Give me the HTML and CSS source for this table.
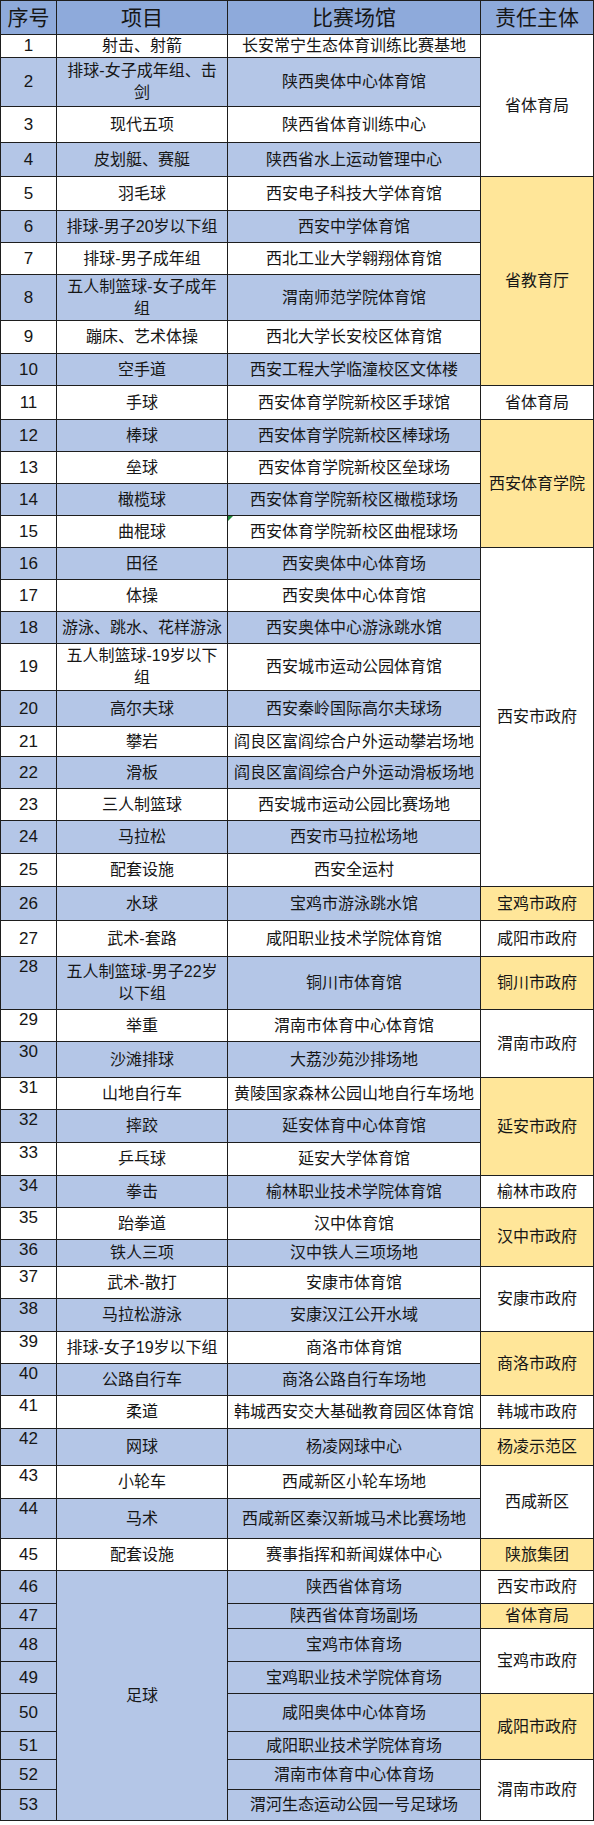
FILE: index.html
```html
<!DOCTYPE html>
<html lang="zh-CN">
<head>
<meta charset="utf-8">
<title>比赛场馆</title>
<link rel="stylesheet" href="styles.css">
</head>
<body>
<div class="sheet">
  <div class="c h">序号</div><div class="c h">项目</div><div class="c h">比赛场馆</div><div class="c h">责任主体</div>

  <div class="c n">1</div><div class="c">射击、射箭</div><div class="c">长安常宁生态体育训练比赛基地</div><div class="c s4">省体育局</div>
  <div class="c n b">2</div><div class="c b">排球-女子成年组、击<br>剑</div><div class="c b">陕西奥体中心体育馆</div>
  <div class="c n">3</div><div class="c">现代五项</div><div class="c">陕西省体育训练中心</div>
  <div class="c n b">4</div><div class="c b">皮划艇、赛艇</div><div class="c b">陕西省水上运动管理中心</div>

  <div class="c n">5</div><div class="c">羽毛球</div><div class="c">西安电子科技大学体育馆</div><div class="c s6 y">省教育厅</div>
  <div class="c n b">6</div><div class="c b">排球-男子20岁以下组</div><div class="c b">西安中学体育馆</div>
  <div class="c n">7</div><div class="c">排球-男子成年组</div><div class="c">西北工业大学翱翔体育馆</div>
  <div class="c n b">8</div><div class="c b">五人制篮球-女子成年<br>组</div><div class="c b">渭南师范学院体育馆</div>
  <div class="c n">9</div><div class="c">蹦床、艺术体操</div><div class="c">西北大学长安校区体育馆</div>
  <div class="c n b">10</div><div class="c b">空手道</div><div class="c b">西安工程大学临潼校区文体楼</div>

  <div class="c n">11</div><div class="c">手球</div><div class="c">西安体育学院新校区手球馆</div><div class="c">省体育局</div>

  <div class="c n b">12</div><div class="c b">棒球</div><div class="c b">西安体育学院新校区棒球场</div><div class="c s4 y">西安体育学院</div>
  <div class="c n">13</div><div class="c">垒球</div><div class="c">西安体育学院新校区垒球场</div>
  <div class="c n b">14</div><div class="c b">橄榄球</div><div class="c b">西安体育学院新校区橄榄球场</div>
  <div class="c n">15</div><div class="c">曲棍球</div><div class="c flag">西安体育学院新校区曲棍球场</div>

  <div class="c n b">16</div><div class="c b">田径</div><div class="c b">西安奥体中心体育场</div><div class="c s10">西安市政府</div>
  <div class="c n">17</div><div class="c">体操</div><div class="c">西安奥体中心体育馆</div>
  <div class="c n b">18</div><div class="c b">游泳、跳水、花样游泳</div><div class="c b">西安奥体中心游泳跳水馆</div>
  <div class="c n">19</div><div class="c">五人制篮球-19岁以下<br>组</div><div class="c">西安城市运动公园体育馆</div>
  <div class="c n b">20</div><div class="c b">高尔夫球</div><div class="c b">西安秦岭国际高尔夫球场</div>
  <div class="c n">21</div><div class="c">攀岩</div><div class="c">阎良区富阎综合户外运动攀岩场地</div>
  <div class="c n b">22</div><div class="c b">滑板</div><div class="c b">阎良区富阎综合户外运动滑板场地</div>
  <div class="c n">23</div><div class="c">三人制篮球</div><div class="c">西安城市运动公园比赛场地</div>
  <div class="c n b">24</div><div class="c b">马拉松</div><div class="c b">西安市马拉松场地</div>
  <div class="c n">25</div><div class="c">配套设施</div><div class="c">西安全运村</div>

  <div class="c n b">26</div><div class="c b">水球</div><div class="c b">宝鸡市游泳跳水馆</div><div class="c y">宝鸡市政府</div>
  <div class="c n">27</div><div class="c">武术-套路</div><div class="c">咸阳职业技术学院体育馆</div><div class="c">咸阳市政府</div>
  <div class="c n b t">28</div><div class="c b">五人制篮球-男子22岁<br>以下组</div><div class="c b">铜川市体育馆</div><div class="c y">铜川市政府</div>
  <div class="c n t">29</div><div class="c">举重</div><div class="c">渭南市体育中心体育馆</div><div class="c s2">渭南市政府</div>
  <div class="c n b t">30</div><div class="c b">沙滩排球</div><div class="c b">大荔沙苑沙排场地</div>
  <div class="c n t">31</div><div class="c">山地自行车</div><div class="c">黄陵国家森林公园山地自行车场地</div><div class="c s3 y">延安市政府</div>
  <div class="c n b t">32</div><div class="c b">摔跤</div><div class="c b">延安体育中心体育馆</div>
  <div class="c n t">33</div><div class="c">乒乓球</div><div class="c">延安大学体育馆</div>
  <div class="c n b t">34</div><div class="c b">拳击</div><div class="c b">榆林职业技术学院体育馆</div><div class="c">榆林市政府</div>
  <div class="c n t">35</div><div class="c">跆拳道</div><div class="c">汉中体育馆</div><div class="c s2 y">汉中市政府</div>
  <div class="c n b t">36</div><div class="c b">铁人三项</div><div class="c b">汉中铁人三项场地</div>
  <div class="c n t">37</div><div class="c">武术-散打</div><div class="c">安康市体育馆</div><div class="c s2">安康市政府</div>
  <div class="c n b t">38</div><div class="c b">马拉松游泳</div><div class="c b">安康汉江公开水域</div>
  <div class="c n t">39</div><div class="c">排球-女子19岁以下组</div><div class="c">商洛市体育馆</div><div class="c s2 y">商洛市政府</div>
  <div class="c n b t">40</div><div class="c b">公路自行车</div><div class="c b">商洛公路自行车场地</div>
  <div class="c n t">41</div><div class="c">柔道</div><div class="c">韩城西安交大基础教育园区体育馆</div><div class="c">韩城市政府</div>
  <div class="c n b t">42</div><div class="c b">网球</div><div class="c b">杨凌网球中心</div><div class="c y">杨凌示范区</div>
  <div class="c n t">43</div><div class="c">小轮车</div><div class="c">西咸新区小轮车场地</div><div class="c s2">西咸新区</div>
  <div class="c n b t">44</div><div class="c b">马术</div><div class="c b">西咸新区秦汉新城马术比赛场地</div>
  <div class="c n">45</div><div class="c">配套设施</div><div class="c">赛事指挥和新闻媒体中心</div><div class="c y">陕旅集团</div>

  <div class="c n b">46</div><div class="c b s8">足球</div><div class="c b">陕西省体育场</div><div class="c">西安市政府</div>
  <div class="c n b">47</div><div class="c b">陕西省体育场副场</div><div class="c y">省体育局</div>
  <div class="c n b">48</div><div class="c b">宝鸡市体育场</div><div class="c s2">宝鸡市政府</div>
  <div class="c n b">49</div><div class="c b">宝鸡职业技术学院体育场</div>
  <div class="c n b">50</div><div class="c b">咸阳奥体中心体育场</div><div class="c s2 y">咸阳市政府</div>
  <div class="c n b">51</div><div class="c b">咸阳职业技术学院体育场</div>
  <div class="c n b">52</div><div class="c b">渭南市体育中心体育场</div><div class="c s2">渭南市政府</div>
  <div class="c n b">53</div><div class="c b">渭河生态运动公园一号足球场</div>
</div>
</body>
</html>
```

FILE: styles.css
```css
html, body {
  margin: 0;
  padding: 0;
  background: #ffffff;
}

body {
  font-family: "Liberation Sans", "Noto Sans CJK SC", sans-serif;
  color: #161616;
}

.sheet {
  display: grid;
  width: max-content;
  grid-template-columns: 55px 170px 252px 112px;
  grid-template-rows:
    33px 22px 48px 35px 33px 33px 31px 31px 45px 32px
    31px 33px 31px 31px 31px 31px 31px 31px 31px 46px
    35px 29px 31px 31px 32px 32px 33px 35px 52px 31px
    35px 31px 32px 32px 31px 31px 26px 31px 32px 31px
    31px 32px 36px 32px 39px 31px 32px 24px 32px 31px
    37px 27px 29px 30px;
  gap: 1px;
  padding: 1px;
  background: #1e1e1e;
}

.c {
  display: flex;
  align-items: center;
  justify-content: center;
  text-align: center;
  background: #ffffff;
  font-size: 16px;
  line-height: 22px;
  white-space: nowrap;
  overflow: hidden;
  position: relative;
}

.h {
  background: #8eaadb;
  font-size: 21px;
  line-height: 28px;
}

.n {
  font-size: 17px;
}

.t {
  align-items: flex-start;
  line-height: 20px;
}

.b {
  background: #b4c6e7;
}

.y {
  background: #ffe699;
}

.s2 { grid-row: span 2; }
.s3 { grid-row: span 3; }
.s4 { grid-row: span 4; }
.s6 { grid-row: span 6; }
.s8 { grid-row: span 8; }
.s10 { grid-row: span 10; }

.flag::before {
  content: "";
  position: absolute;
  top: 0;
  left: 0;
  width: 0;
  height: 0;
  border-top: 5px solid #1e8a3a;
  border-right: 5px solid transparent;
}
```
